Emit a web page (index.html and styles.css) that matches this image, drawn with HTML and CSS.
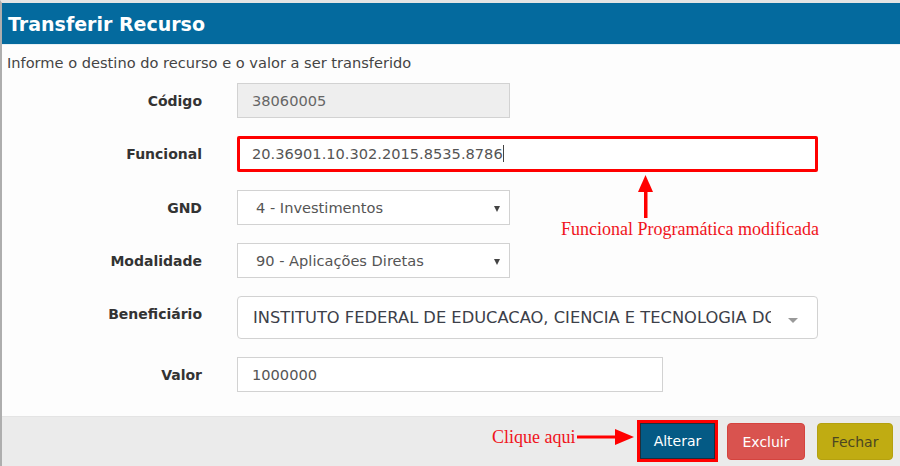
FILE: index.html
```html
<!DOCTYPE html>
<html lang="pt">
<head>
<meta charset="utf-8">
<title>Transferir Recurso</title>
<link rel="stylesheet" href="styles.css">
</head>
<body>
<div class="page">
  <div class="modal">
    <div class="modal-header">Transferir Recurso</div>
    <div class="modal-body">
      <p class="intro">Informe o destino do recurso e o valor a ser transferido</p>
      <div class="form">
        <div class="row">
          <label class="label">Código</label>
          <div class="control short disabled">38060005</div>
        </div>
        <div class="row">
          <label class="label">Funcional</label>
          <div class="control wide highlight">20.36901.10.302.2015.8535.8786<span class="caret"></span></div>
        </div>
        <div class="row">
          <label class="label">GND</label>
          <div class="control short select">4 - Investimentos<span class="arrow"></span></div>
        </div>
        <div class="row">
          <label class="label">Modalidade</label>
          <div class="control short select">90 - Aplicações Diretas<span class="arrow"></span></div>
        </div>
        <div class="row">
          <label class="label">Beneficiário</label>
          <div class="control wide select2"><span class="s2-text">INSTITUTO FEDERAL DE EDUCACAO, CIENCIA E TECNOLOGIA DO</span><span class="s2-arrow"></span></div>
        </div>
        <div class="row">
          <label class="label">Valor</label>
          <div class="control medium">1000000</div>
        </div>
      </div>
    </div>
    <div class="modal-footer">
      <span class="mark"><button class="btn btn-primary">Alterar</button></span>
      <button class="btn btn-danger">Excluir</button>
      <button class="btn btn-warning">Fechar</button>
    </div>
  </div>

  <svg class="ann-arrow-up" width="17" height="45" viewBox="0 0 17 45"><polygon points="8.5,0 1,17 16,17" fill="#f00"/><rect x="7" y="15" width="3.5" height="28" fill="#f00"/></svg>
  <div class="ann-text ann-funcional">Funcional Programática modificada</div>
  <div class="ann-text ann-clique">Clique aqui</div>
  <svg class="ann-arrow-right" width="58" height="18" viewBox="0 0 58 18"><rect x="0" y="7.5" width="42" height="3" fill="#f00"/><polygon points="38,1 57,9 38,17" fill="#f00"/></svg>
</div>
</body>
</html>
```

FILE: styles.css
```css
* { box-sizing: border-box; }
html, body { margin: 0; padding: 0; }
body {
  width: 900px;
  height: 466px;
  overflow: hidden;
  background: #fff;
  font-family: "DejaVu Sans", Verdana, sans-serif;
}
.page {
  position: relative;
  width: 900px;
  height: 466px;
  border-left: 2px solid #aeaeae;
  border-top: 3px solid #e4e4e4;
}
.modal {
  display: flex;
  flex-direction: column;
  height: 463px;
}
.modal-header {
  height: 42px;
  background: #046a9e;
  color: #fff;
  font-weight: bold;
  font-size: 19px;
  line-height: 42px;
  padding-left: 6px;
  border-bottom: 1px solid #e8f0f4;
}
.modal-body {
  flex: 1;
  padding-top: 9px;
  background: #fdfdfd;
}
.intro {
  margin: 0 0 11px 5px;
  font-size: 14.6px;
  line-height: 18px;
  color: #444;
}
.form {
  display: flex;
  flex-direction: column;
  gap: 18px;
}
.row {
  display: flex;
  align-items: flex-start;
  gap: 35px;
}
.label {
  width: 200px;
  height: 35px;
  text-align: right;
  font-weight: bold;
  font-size: 14px;
  line-height: 37px;
  color: #333;
}
.control {
  position: relative;
  height: 35px;
  border: 1px solid #d2d2d2;
  background: #fff;
  padding: 0 14px;
  font-size: 14.6px;
  line-height: 33px;
  color: #555;
  white-space: nowrap;
}
.short { width: 273px; }
.medium { width: 426px; }
.wide { width: 581px; }
.disabled { background: #eee; color: #666; }
.highlight {
  height: 36px;
  border: 3px solid #f00;
  border-radius: 2px;
  padding-left: 12px;
  line-height: 30px;
}
.caret {
  display: inline-block;
  width: 1px;
  height: 17px;
  background: #444;
  vertical-align: -3px;
}
.select { padding-left: 18px; }
.arrow {
  position: absolute;
  right: 9px;
  top: 15px;
  width: 0;
  height: 0;
  border-left: 3.5px solid transparent;
  border-right: 3.5px solid transparent;
  border-top: 6px solid #444;
}
.select2 {
  height: 43px;
  border-radius: 4px;
  padding: 0 46px 0 15px;
  line-height: 41px;
  font-size: 16.3px;
  color: #3c4049;
  overflow: hidden;
}
.s2-text {
  display: block;
  overflow: hidden;
}
.s2-arrow {
  position: absolute;
  right: 19px;
  top: 21px;
  width: 0;
  height: 0;
  border-left: 5px solid transparent;
  border-right: 5px solid transparent;
  border-top: 5px solid #999;
}
.modal-footer {
  height: 50px;
  background: #ebebeb;
  border-top: 1px solid #e4e4e4;
  display: flex;
  justify-content: flex-end;
  align-items: center;
  gap: 12px;
  padding-right: 7px;
}
.mark {
  display: block;
  border: 3px solid #f00;
  margin-right: -3px;
  margin-top: -2px;
}
.btn {
  display: block;
  font-family: "DejaVu Sans", Verdana, sans-serif;
  font-size: 14px;
  border-radius: 4px;
  cursor: pointer;
}
.btn-primary {
  width: 75px;
  height: 36px;
  border: 1px solid #1e2f3c;
  border-radius: 0;
  background: #045a85;
  color: #fff;
}
.btn-danger {
  width: 78px;
  height: 37px;
  border: 1px solid #d5433e;
  background: #d9534f;
  color: #fff;
}
.btn-warning {
  width: 76px;
  height: 37px;
  border: 1px solid #b5a10f;
  background: #c0ac12;
  color: #4b4622;
}
.ann-text {
  position: absolute;
  font-family: "Liberation Serif", "Times New Roman", serif;
  font-size: 18px;
  color: #f0141c;
  white-space: nowrap;
}
.ann-funcional { left: 559px; top: 216px; }
.ann-clique { left: 490px; top: 424px; }
.ann-arrow-up { position: absolute; left: 635px; top: 172px; }
.ann-arrow-right { position: absolute; left: 575px; top: 425px; }
```
